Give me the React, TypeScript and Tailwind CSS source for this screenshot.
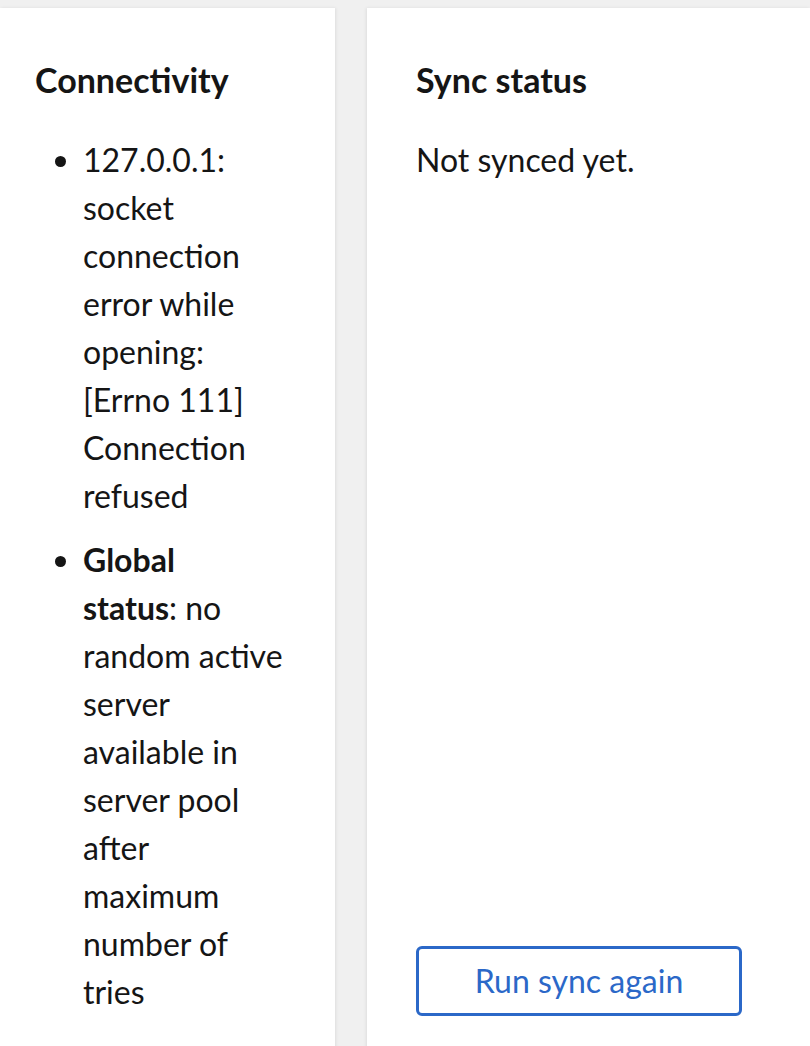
import React from "react";

const font = { fontFamily: '"Lato", "Open Sans", sans-serif' };

export default function App() {
  return (
    <div
      className="w-full min-h-screen bg-[#f0f0f0] pt-2 flex gap-8 text-[#151515] overflow-hidden"
      style={font}
    >
      <div className="w-[335px] shrink-0 bg-white shadow-[1px_0_3px_rgba(0,0,0,0.08)] pl-[35px] pr-8 pt-12 pb-12">
        <h2 className="text-[34px] leading-[48px] font-bold">Connectivity</h2>
        <ul className="mt-8 pl-12 list-disc text-[32px] leading-[48px] whitespace-nowrap">
          <li className="mb-4">
            127.0.0.1:
            <br />
            socket
            <br />
            connection
            <br />
            error while
            <br />
            opening:
            <br />
            [Errno 111]
            <br />
            Connection
            <br />
            refused
          </li>
          <li>
            <span className="font-bold">Global</span>
            <br />
            <span className="font-bold">status</span>: no
            <br />
            random active
            <br />
            server
            <br />
            available in
            <br />
            server pool
            <br />
            after
            <br />
            maximum
            <br />
            number of
            <br />
            tries
          </li>
        </ul>
      </div>
      <div className="flex-1 bg-white shadow-[-1px_0_3px_rgba(0,0,0,0.08)] pl-[49px] pr-12 pt-12 pb-12 flex flex-col">
        <h2 className="text-[34px] leading-[48px] font-bold">Sync status</h2>
        <p className="mt-8 text-[32px] leading-[48px]">Not synced yet.</p>
        <div className="mt-auto">
          <button className="w-[326px] h-[70px] border-[3px] border-[#2b68c8] rounded-md text-[#2b68c8] text-[32px] bg-white">
            Run sync again
          </button>
        </div>
      </div>
    </div>
  );
}
